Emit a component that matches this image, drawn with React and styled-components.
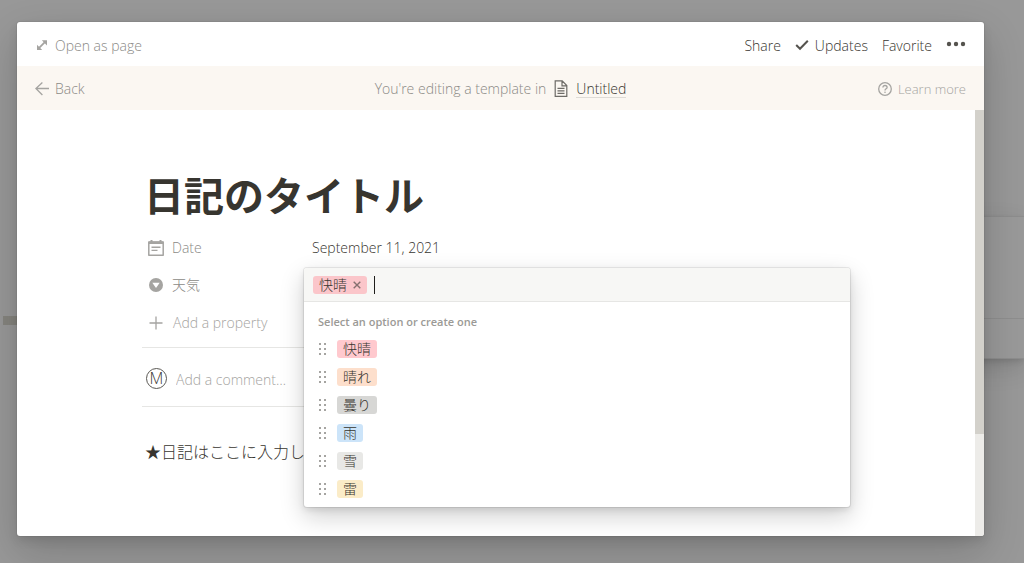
import React from 'react';
import styled, { createGlobalStyle } from 'styled-components';

const options = [
  { name: '快晴', color: '#ffc9ce' },
  { name: '晴れ', color: '#fddfcc' },
  { name: '曇り', color: '#d7d7d5' },
  { name: '雨', color: '#cce4f9' },
  { name: '雪', color: '#e8e8e6' },
  { name: '雷', color: '#fbecc8' },
];

function App() {
  return (
    <Overlay>
      <GlobalStyle />
      <BackgroundBar />
      <BackgroundPanel />
      <Modal role="dialog" aria-label="日記のタイトル">
        <TopBar>
          <BarButton $muted>
            <ExpandIcon />
            Open as page
          </BarButton>
          <Actions>
            <BarButton>Share</BarButton>
            <BarButton>
              <CheckIcon />
              Updates
            </BarButton>
            <BarButton>Favorite</BarButton>
            <BarButton aria-label="More">
              <DotsIcon />
            </BarButton>
          </Actions>
        </TopBar>
        <Banner>
          <BarButton $muted>
            <BackIcon />
            Back
          </BarButton>
          <BannerText>
            You're editing a template in
            <PageIcon />
            <PageLink href="#untitled">Untitled</PageLink>
          </BannerText>
          <HelpLink href="#help">
            <HelpIcon />
            Learn more
          </HelpLink>
        </Banner>
        <Body>
          <Page>
            <Title>日記のタイトル</Title>
            <Property>
              <PropertyName>
                <DateIcon />
                Date
              </PropertyName>
              <PropertyValue>September 11, 2021</PropertyValue>
            </Property>
            <Property>
              <PropertyName>
                <SelectIcon />
                天気
              </PropertyName>
              <Popup>
                <PopupInput>
                  <Tag $color="#fbc6ca">
                    快晴
                    <RemoveButton aria-label="快晴">
                      <CloseIcon />
                    </RemoveButton>
                  </Tag>
                  <Caret />
                  <SearchInput aria-label="天気" />
                </PopupInput>
                <PopupHint>Select an option or create one</PopupHint>
                <OptionList>
                  {options.map(({ name, color }) => (
                    <Option key={name}>
                      <GripIcon />
                      <OptionButton>
                        <Tag $color={color}>{name}</Tag>
                      </OptionButton>
                    </Option>
                  ))}
                </OptionList>
              </Popup>
            </Property>
            <AddProperty>
              <PlusIcon />
              Add a property
            </AddProperty>
            <CommentRow>
              <Avatar>M</Avatar>
              <CommentInput
                aria-label="Add a comment"
                placeholder="Add a comment…"
              />
            </CommentRow>
            <Paragraph>★日記はここに入力し</Paragraph>
          </Page>
          <ScrollTrack>
            <ScrollThumb />
          </ScrollTrack>
        </Body>
      </Modal>
    </Overlay>
  );
}

const ExpandIcon = () => (
  <Icon width="14" height="14" viewBox="0 0 14 14">
    <path
      d="M3.4 9.6 10.6 2.4"
      fill="none"
      stroke="currentColor"
      strokeWidth="1.8"
    />
    <path d="M6.8 1.2H12v5.2zM2 5.800V11h5.200z" fill="currentColor" />
  </Icon>
);

const CheckIcon = () => (
  <Icon width="14" height="14" viewBox="0 0 14 14">
    <path
      d="M1.200 6 5 9.800 12.800 1.800"
      fill="none"
      stroke="currentColor"
      strokeWidth="2"
    />
  </Icon>
);

const DotsIcon = () => (
  <Icon width="20" height="14" viewBox="0 0 20 14" fill="currentColor">
    <circle cx="3" cy="5" r="2.200" />
    <circle cx="10" cy="5" r="2.200" />
    <circle cx="17" cy="5" r="2.200" />
  </Icon>
);

const BackIcon = () => (
  <Icon width="14" height="14" viewBox="0 0 14 14">
    <path
      d="M14 6.500H1M7.400.5.900 6.500l6.500 6.500"
      fill="none"
      stroke="currentColor"
      strokeWidth="1.300"
    />
  </Icon>
);

const PageIcon = () => (
  <Icon width="14" height="18" viewBox="0 0 14 18">
    <path
      d="M1.200.8h7l4.600 4.800v10.800H1.200zM8 .8v5h4.800M3.500 8.400h7M3.500 10.900h7M3.500 13.400h7"
      fill="none"
      stroke="#6d6b67"
      strokeWidth="1.200"
    />
  </Icon>
);

const HelpIcon = () => (
  <Icon width="14" height="14" viewBox="0 0 14 14">
    <circle cx="7" cy="7" r="6.3" fill="none" stroke="currentColor" strokeWidth="1.3" />
    <path
      d="M4.9 5.6C4.9 4.3 5.8 3.5 7 3.5s2.1.8 2.1 1.9C9.1 6.8 7 6.9 7 8.5"
      fill="none"
      stroke="currentColor"
      strokeWidth="1.3"
    />
    <circle cx="7" cy="10.3" r=".8" fill="currentColor" />
  </Icon>
);

const DateIcon = () => (
  <Icon width="16" height="16" viewBox="0 0 16 16">
    <path
      d="M.8 2h14.4v13.200H.8z"
      fill="none"
      stroke="currentColor"
      strokeWidth="1.500"
      strokeLinejoin="round"
    />
    <path d="M.8 1.500h14.400v2.500H.8zM2.500 0h2v2h-2zM11.500 0h2v2h-2z" fill="currentColor" />
    <path d="M3.500 7.200h9M3.500 10.400h6" stroke="currentColor" strokeWidth="1.400" />
  </Icon>
);

const SelectIcon = () => (
  <Icon width="16" height="16" viewBox="0 0 16 16">
    <circle cx="8" cy="8" r="7" fill="currentColor" />
    <path d="M4.300 5.800h7.400L8 11z" fill="#fff" />
  </Icon>
);

const PlusIcon = () => (
  <Icon width="16" height="16" viewBox="0 0 16 16">
    <path d="M8 1.500v13M1.500 8h13" stroke="currentColor" strokeWidth="1.300" />
  </Icon>
);

const CloseIcon = () => (
  <Icon width="8" height="8" viewBox="0 0 8 8">
    <path d="m.7.7 6.600 6.600M7.300.7.7 7.300" stroke="currentColor" strokeWidth="1.400" />
  </Icon>
);

const GripIcon = () => (
  <Icon width="8" height="14" viewBox="0 0 8 14" fill="#a5a4a1">
    {[1, 6, 11].map((y) => (
      <React.Fragment key={y}>
        <rect x="0" y={y} width="2" height="2" />
        <rect x="5" y={y} width="2" height="2" />
      </React.Fragment>
    ))}
  </Icon>
);

const GlobalStyle = createGlobalStyle`
  * {
    box-sizing: border-box;
  }

  body {
    margin: 0;
    color: #37352f;
    font-family: 'Open Sans', 'Noto Sans CJK JP', sans-serif;
    font-size: 14px;
    font-weight: 300;
    line-height: 20px;
  }

  button,
  input {
    padding: 0;
    border: 0;
    outline: 0;
    background: none;
    color: inherit;
    font: inherit;
  }
`;

const Icon = styled.svg.attrs({ 'aria-hidden': true })`
  display: block;
  flex: none;
`;

const Overlay = styled.div`
  position: relative;
  display: flex;
  min-height: 100vh;
  padding: 22px 40px 27px 17px;
  overflow: hidden;
  background-color: #989898;
`;

const BackgroundBar = styled.div`
  position: absolute;
  top: 316px;
  left: 3px;
  width: 40px;
  height: 9px;
  background-color: #85847e;
`;

const BackgroundPanel = styled.div`
  position: absolute;
  top: 217px;
  right: 0;
  width: 120px;
  height: 141px;
  background: linear-gradient(#8e8e8e, #8e8e8e) 0 101px / 100% 1px no-repeat #999;
  box-shadow: 0 0 0 1px #8d8d8d, 0 3px 6px rgba(0, 0, 0, 0.12),
    0 9px 24px rgba(0, 0, 0, 0.14);
`;

const Modal = styled.main`
  position: relative;
  display: flex;
  flex: 1;
  flex-direction: column;
  min-width: 0;
  border-radius: 3px;
  background-color: #fff;
  box-shadow: 0 0 0 1px rgba(15, 15, 15, 0.05), 0 5px 10px rgba(15, 15, 15, 0.1),
    0 15px 40px rgba(15, 15, 15, 0.2);
`;

const TopBar = styled.header`
  display: flex;
  align-items: center;
  justify-content: space-between;
  height: 44px;
  padding: 4px 18px 0;
`;

const Actions = styled.div`
  display: flex;
  gap: 14px;
`;

const BarButton = styled.button`
  display: flex;
  align-items: center;
  gap: 6px;
  color: ${({ $muted }) => ($muted ? '#8b8a86' : '#37352f')};
  cursor: pointer;

  svg {
    color: ${({ $muted }) => ($muted ? '#a5a4a1' : '#55534e')};
  }
`;

const Banner = styled.div`
  display: grid;
  grid-template-columns: 1fr auto 1fr;
  align-items: center;
  height: 44px;
  padding: 2px 18px 0;
  background-color: #fbf7f2;
`;

const BannerText = styled.p`
  display: flex;
  align-items: center;
  gap: 8px;
  margin: 0;
  color: #8b8a86;
`;

const PageLink = styled.a`
  border-bottom: 1px solid #dedbd6;
  color: #37352f;
  line-height: 16px;
  text-decoration: none;
`;

const HelpLink = styled.a`
  display: flex;
  align-items: center;
  justify-self: end;
  gap: 6px;
  color: #a5a4a1;
  font-size: 13px;
  text-decoration: none;
`;

const Body = styled.div`
  display: flex;
  flex: 1;
`;

const Page = styled.article`
  flex: 1;
  min-width: 0;
  padding: 62px 125px 0;
`;

const ScrollTrack = styled.div`
  width: 9px;
  border-radius: 0 0 3px 0;
  background-color: #edece9;
`;

const ScrollThumb = styled.div`
  height: 76%;
  background-color: #d3d1cb;
`;

const Title = styled.h1`
  margin: 0 0 9px;
  padding: 0 2px;
  font-size: 40px;
  font-weight: 700;
  line-height: 48px;
`;

const Property = styled.div`
  position: relative;
  display: flex;
  align-items: center;
  height: 37px;
`;

const PropertyName = styled.div`
  display: flex;
  align-items: center;
  gap: 8px;
  width: 162px;
  padding-left: 6px;
  color: #8b8a86;

  svg {
    color: #a5a4a1;
  }
`;

const PropertyValue = styled.div`
  padding-left: 8px;
`;

const Popup = styled.div`
  position: absolute;
  top: 2px;
  right: 0;
  left: 162px;
  z-index: 1;
  padding-bottom: 4px;
  border-radius: 3px;
  background-color: #fff;
  box-shadow: 0 0 0 1px rgba(15, 15, 15, 0.08), 0 3px 6px rgba(15, 15, 15, 0.1),
    0 9px 24px rgba(15, 15, 15, 0.2);
`;

const PopupInput = styled.div`
  display: flex;
  align-items: center;
  height: 34px;
  padding: 0 9px;
  border-bottom: 1px solid #e6e6e4;
  border-radius: 3px 3px 0 0;
  background-color: #f7f7f5;
`;

const Tag = styled.span`
  display: inline-flex;
  align-items: center;
  gap: 6px;
  height: 18px;
  padding: 0 6px;
  border-radius: 3px;
  background-color: ${({ $color }) => $color};
  line-height: 18px;
`;

const RemoveButton = styled.button`
  color: #85706f;
  cursor: pointer;
`;

const Caret = styled.span`
  width: 1px;
  height: 18px;
  margin-left: 7px;
  background-color: #1f1e1b;
`;

const SearchInput = styled.input`
  flex: 1;
  min-width: 0;
  caret-color: transparent;
`;

const PopupHint = styled.p`
  margin: 0;
  padding: 10px 14px 3px;
  color: #9b9a96;
  font-size: 11px;
  font-weight: 600;
`;

const OptionList = styled.ul`
  margin: 0;
  padding: 0 15px;
  list-style: none;
`;

const Option = styled.li`
  display: flex;
  align-items: center;
  gap: 10px;
  height: 28px;
`;

const OptionButton = styled.button`
  display: flex;
  flex: 1;
  cursor: pointer;
`;

const AddProperty = styled.button`
  display: flex;
  align-items: center;
  gap: 9px;
  height: 40px;
  padding-left: 6px;
  color: #a5a4a1;
  cursor: pointer;
`;

const CommentRow = styled.div`
  display: flex;
  align-items: center;
  gap: 9px;
  height: 60px;
  margin-top: 4px;
  padding: 2px 4px 0;
  border-top: 1px solid #e6e6e4;
  border-bottom: 1px solid #e6e6e4;
`;

const Avatar = styled.span`
  width: 21px;
  height: 21px;
  border: 1px solid #5a5853;
  border-radius: 50%;
  font-size: 16px;
  line-height: 19px;
  text-align: center;
`;

const CommentInput = styled.input`
  flex: 1;
  padding-top: 4px;

  &::placeholder {
    color: #a5a4a1;
    opacity: 1;
  }
`;

const Paragraph = styled.p`
  margin: 32px 0 0;
  padding: 0 3px;
  font-size: 16px;
  line-height: 26px;
`;

export default App;
